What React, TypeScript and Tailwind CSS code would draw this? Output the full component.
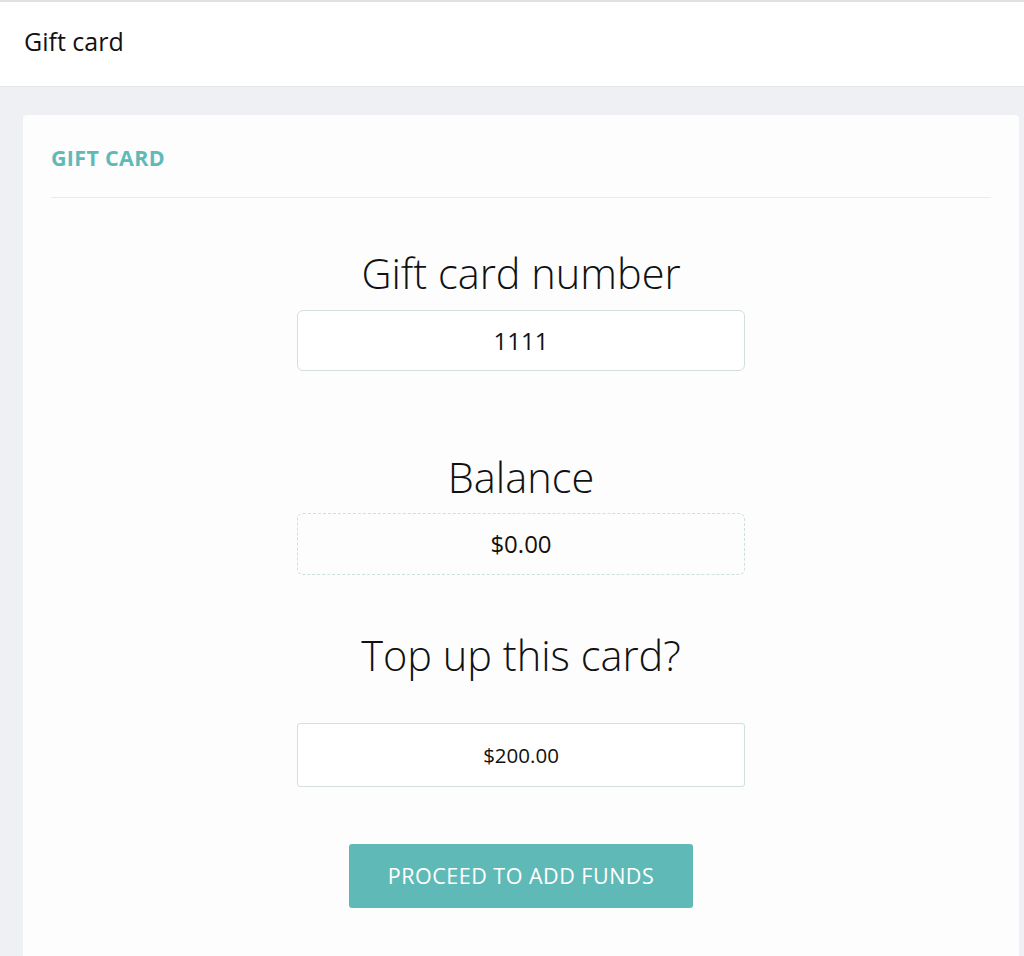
import React from "react";

export default function App() {
  const font = { fontFamily: '"Open Sans", "Noto Sans", sans-serif' };
  return (
    <div className="min-h-[956px] bg-[#eef0f4] text-[#111]" style={font}>
      <header className="h-[87px] bg-white border-t-2 border-b border-t-[#dfe1e5] border-b-[#e3e5e9] flex items-center px-6">
        <h1 className="text-[25px] font-normal text-[#111] leading-none mt-[-6px]">Gift card</h1>
      </header>
      <div className="pt-[28px] pl-[23px] pr-[5px]">
        <div className="bg-[#fdfdfe] rounded-t-[4px] min-h-[842px] px-[28px]">
          <div className="pt-[34px] pb-[30px] border-b border-[#e9ebee]">
            <h2 className="text-[21.5px] font-bold tracking-[0.3px] text-[#5fbab7] leading-[18px]">GIFT CARD</h2>
          </div>
          <div className="flex flex-col items-center">
            <div className="mt-[49px] text-[41.5px] font-light leading-[52px] text-[#111]">Gift card number</div>
            <div className="mt-[11px] w-[448px] h-[61px] rounded-[6px] border border-[#d3dede] bg-white flex items-center justify-center text-[24px] text-[#111]">
              1111
            </div>
            <div className="mt-[80px] text-[41.5px] font-light leading-[52px] text-[#111]">Balance</div>
            <div className="mt-[10px] w-[448px] h-[62px] rounded-[6px] border border-dashed border-[#cfdede] flex items-center justify-center text-[24px] text-[#111]">
              $0.00
            </div>
            <div className="mt-[54px] text-[41.5px] font-light leading-[52px] text-[#111]">Top up this card?</div>
            <div className="mt-[42px] w-[448px] h-[64px] rounded-[3px] border border-[#d3dede] bg-white flex items-center justify-center text-[20.5px] text-[#111]">
              $200.00
            </div>
            <button className="mt-[57px] w-[344px] h-[64px] rounded-[3px] bg-[#5fbab7] text-white text-[21.5px] font-normal tracking-[0.5px] flex items-center justify-center">
              PROCEED TO ADD FUNDS
            </button>
          </div>
        </div>
      </div>
    </div>
  );
}
